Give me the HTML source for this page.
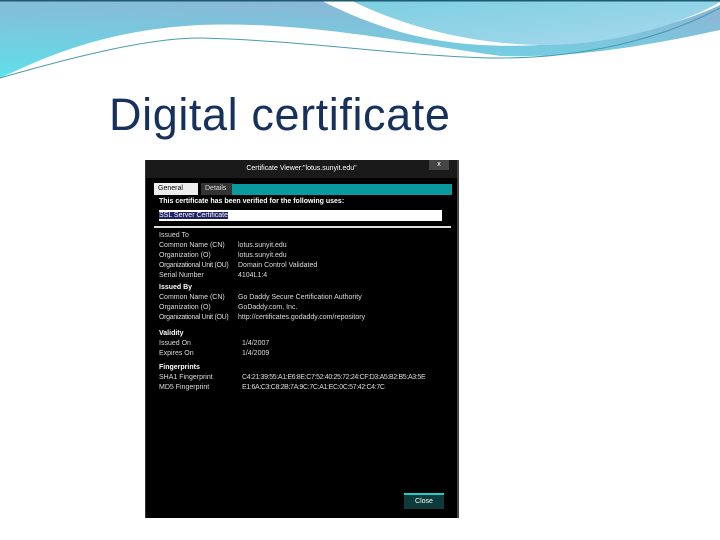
<!DOCTYPE html>
<html><head><style>
body{margin:0;width:720px;height:540px;background:#fff;position:relative;overflow:hidden;font-family:"Liberation Sans",sans-serif}
.t{position:absolute;left:109px;top:89px;font-size:45px;letter-spacing:0.6px;color:#16325c}
.d{position:absolute;left:145px;top:160px;width:311px;height:358px;background:#000;border-left:1px solid #333;border-right:2px solid #444}
.d div{position:absolute;color:#ddd;font-size:7px;white-space:nowrap}
.b{font-weight:bold;color:#fff!important}
</style></head><body>
<svg width="720" height="90" style="position:absolute;left:0;top:0">
<defs><linearGradient id="g" x1="0" y1="1" x2="0.3" y2="0"><stop offset="0" stop-color="#5fe0ea"/><stop offset="1" stop-color="#8ab8d6"/></linearGradient>
<linearGradient id="g2" x1="0" y1="0" x2="1" y2="1"><stop offset="0" stop-color="#7ccfe0"/><stop offset="1" stop-color="#a8d8ee"/></linearGradient></defs>
<rect width="720" height="90" fill="#fff"/>
<path d="M0 0H720V30C660 50 600 70 540 60C460 55 330 20 200 25C100 30 40 60 0 78Z" fill="url(#g)"/>
<path d="M320 0C380 30 440 50 540 45C620 42 690 20 720 5V0Z" fill="#fff"/>
<path d="M350 0C400 25 470 45 545 45C620 45 690 20 720 2V0Z" fill="url(#g2)"/>
<path d="M0 80C80 45 160 30 200 32C300 35 400 55 500 56C580 58 650 45 720 30V90H0Z" fill="#fff"/>
<path d="M0 78C80 55 150 38 200 38C300 40 420 58 500 58C580 58 660 40 720 8" fill="none" stroke="#4a9ab0" stroke-width="1"/>
<rect width="720" height="1.5" fill="#1d5a70"/>
</svg>
<div class="t">Digital certificate</div>
<div class="d">
<div style="left:0;top:0;width:311px;height:18px;background:#1a1a1a;color:#fff;text-align:center;line-height:18px">Certificate Viewer:"lotus.sunyit.edu"</div>
<div style="left:283px;top:0;width:20px;height:10px;background:#444;color:#fff;text-align:center;line-height:9px">x</div>
<div style="left:8px;top:23px;width:40px;height:12px;background:#eee;color:#000;line-height:12px;padding-left:4px">General</div>
<div style="left:55px;top:23px;width:28px;height:12px;background:#333;line-height:12px;padding-left:4px">Details</div>
<div style="left:86px;top:24px;width:220px;height:11px;background:#0a9a9e"></div>
<div class="b" style="left:13px;top:38px">This certificate has been verified for the following uses:</div>
<div style="left:13px;top:50px;width:283px;height:11px;background:#fff;color:#000;line-height:11px"><span style="background:#226;color:#fff">SSL Server Certificate</span></div>
<div style="left:8px;top:66px;width:297px;height:1.5px;background:#ddd"></div>
<div style="left:13px;top:72px">Issued To</div>
<div style="left:13px;top:82px">Common Name (CN)</div><div style="left:92px;top:82px">lotus.sunyit.edu</div>
<div style="left:13px;top:92px">Organization (O)</div><div style="left:92px;top:92px">lotus.sunyit.edu</div>
<div style="left:13px;top:102px;letter-spacing:-0.3px">Organizational Unit (OU)</div><div style="left:92px;top:102px">Domain Control Validated</div>
<div style="left:13px;top:112px">Serial Number</div><div style="left:92px;top:112px">4104L1:4</div>
<div class="b" style="left:13px;top:124px">Issued By</div>
<div style="left:13px;top:134px">Common Name (CN)</div><div style="left:92px;top:134px">Go Daddy Secure Certification Authority</div>
<div style="left:13px;top:144px">Organization (O)</div><div style="left:92px;top:144px">GoDaddy.com, Inc.</div>
<div style="left:13px;top:154px;letter-spacing:-0.3px">Organizational Unit (OU)</div><div style="left:92px;top:154px">http://certificates.godaddy.com/repository</div>
<div class="b" style="left:13px;top:170px">Validity</div>
<div style="left:13px;top:180px">Issued On</div><div style="left:96px;top:180px">1/4/2007</div>
<div style="left:13px;top:190px">Expires On</div><div style="left:96px;top:190px">1/4/2009</div>
<div class="b" style="left:13px;top:204px">Fingerprints</div>
<div style="left:13px;top:214px">SHA1 Fingerprint</div><div style="left:96px;top:214px;letter-spacing:-0.35px">C4:21:39:55:A1:E6:8E:C7:52:40:25:72:24:CF:D3:A5:B2:B5:A3:5E</div>
<div style="left:13px;top:224px">MD5 Fingerprint</div><div style="left:96px;top:224px;letter-spacing:-0.35px">E1:6A:C3:C8:2B:7A:9C:7C:A1:EC:0C:57:42:C4:7C</div>
<div style="left:258px;top:333px;width:40px;height:14px;background:#0d3a3a;border-top:2px solid #2cc;color:#fff;text-align:center;line-height:14px">Close</div>
</div>
</body></html>
